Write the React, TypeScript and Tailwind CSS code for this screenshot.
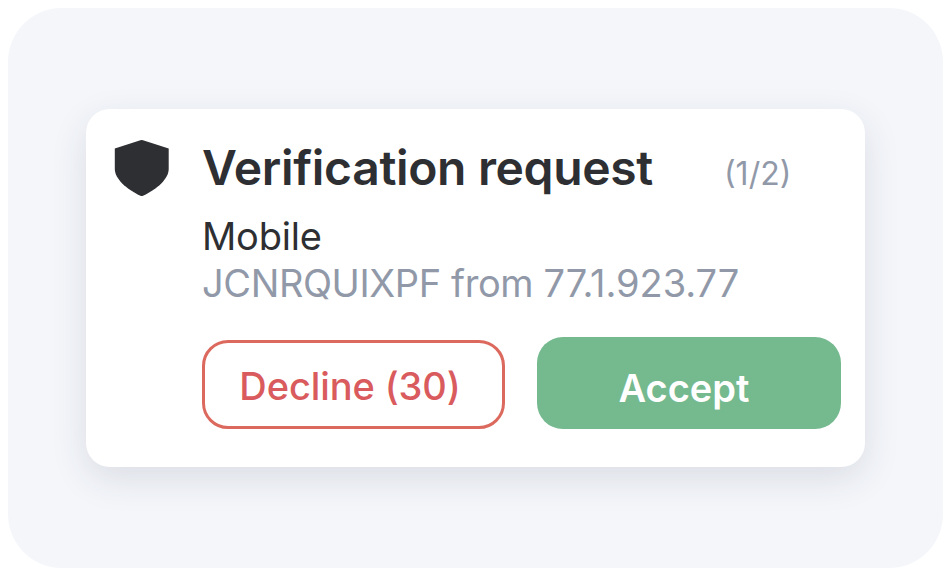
const buttonStyling = "flex items-center justify-center text-[38px] leading-none";

export default function App() {
  return (
    <div className="h-[582px] bg-white px-2 pt-2 font-['Inter',sans-serif]">
      <div className="h-[560px] w-[935px] rounded-[54px] bg-[#f4f6fa] pl-[78px] pt-[101px]">
        <div className="flex h-[358px] w-[779px] rounded-3xl bg-white pl-[29px] shadow-[0_12px_36px_rgba(42,46,70,0.12)]">
          <svg className="mt-[31px] shrink-0 overflow-visible" width="54" height="57" viewBox="0 0 54 57">
            <path
              d="M25.4 0.3 Q26.7 -0.1 28 0.3 L53.7 8.5 V29 C53.7 38.5 42.5 49 28 55.8 Q26.7 56.4 25.4 55.8 C11 49 -0.2 38.5 -0.2 29 V8.5 Z"
              fill="#2e2f33"
            />
          </svg>
          <div className="ml-[33px] flex w-[639px] flex-col whitespace-nowrap">
            <div className="mt-[30px] flex h-[58px] items-center">
              <h1 className="text-[48px] font-semibold leading-[58px] tracking-[-0.34px] text-[#2e2f33]">Verification request</h1>
              <span className="ml-[71px] mt-3 text-[32px] leading-none text-[#9199a9]">(1/2)</span>
            </div>
            <p className="mt-4 text-[38px] leading-[46px] tracking-[-0.22px] text-[#2e2f33]">Mobile</p>
            <p className="text-[38px] leading-[48px] text-[#9199a9]">
              <span className="tracking-[-0.4px]">JCNRQUIXPF from </span>
              <span className="tracking-[-0.05px]">77.1.923.77</span>
            </p>
            <div className="mt-[30px] flex gap-8">
              <button className={`${buttonStyling} mt-[3px] h-[89px] w-[303px] rounded-[26px] border-[3px] border-[#dc695e] pr-[7px] pt-0.5 font-medium tracking-[-0.1px] text-[#d95b5d]`}>
                Decline (30)
              </button>
              <button className={`${buttonStyling} h-[92px] w-[304px] rounded-[26px] bg-[#75b98f] pr-2.5 pt-2.5 font-semibold text-white`}>
                Accept
              </button>
            </div>
          </div>
        </div>
      </div>
    </div>
  );
}
